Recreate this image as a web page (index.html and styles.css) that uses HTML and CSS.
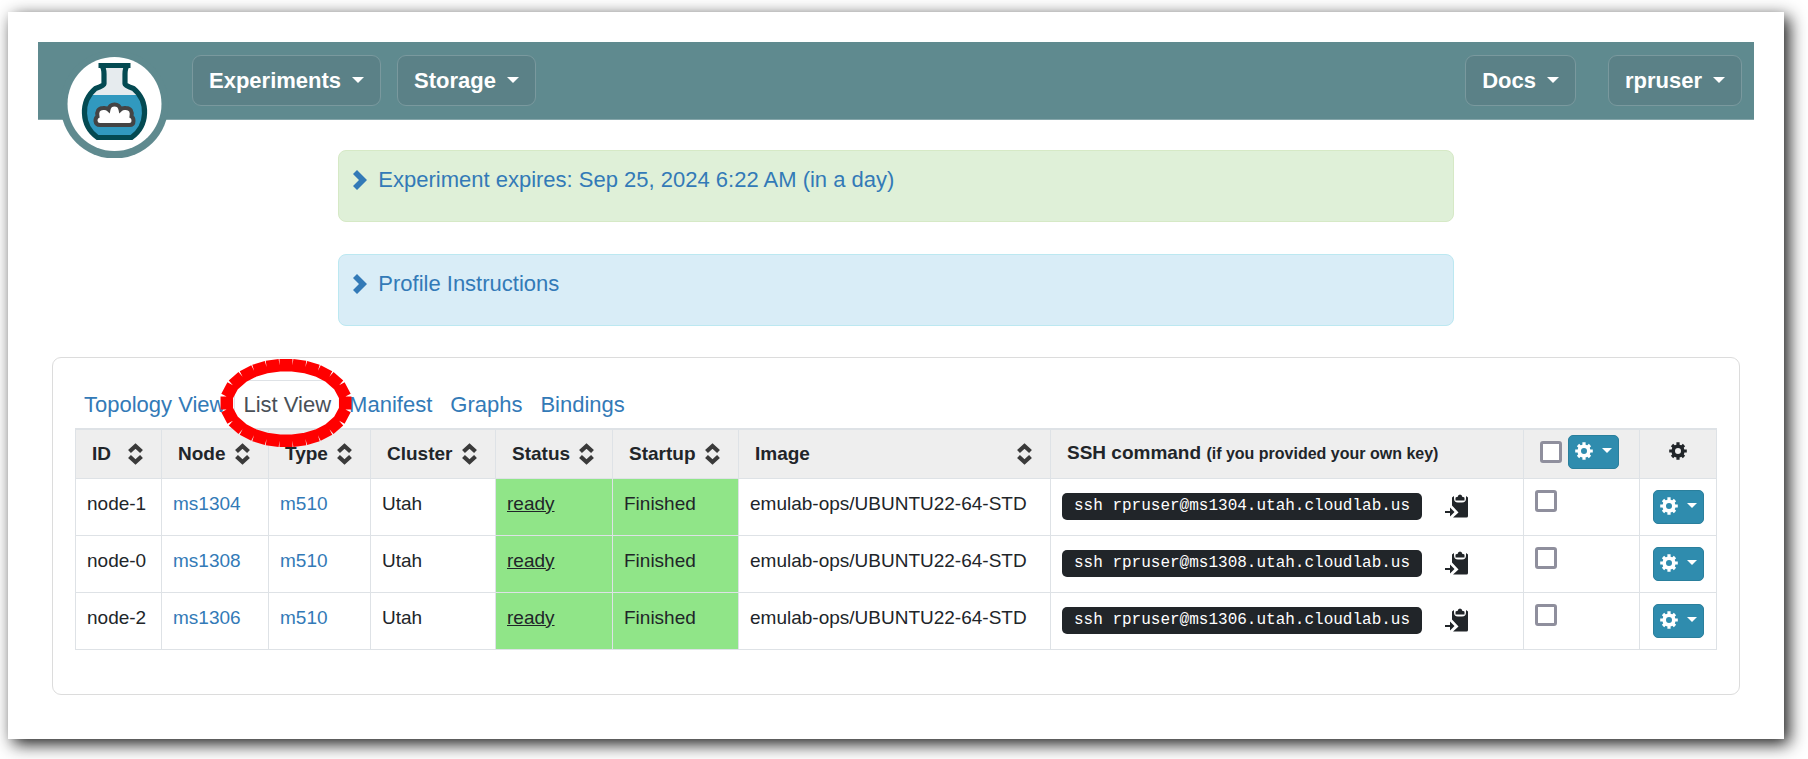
FILE: index.html
```html
<!DOCTYPE html>
<html lang="en">
<head>
<meta charset="utf-8">
<title>Experiment status</title>
<link rel="stylesheet" href="styles.css">
</head>
<body>
<svg class="defs" aria-hidden="true">
  <symbol id="gear" viewBox="-9 -9 18 18">
    <circle r="4.800" fill="none" stroke="currentColor" stroke-width="3.600"/>
    <path d="M0-8.800V-5M0 8.800V5M-8.800 0H-5M8.800 0H5M-6-6l2.500 2.500M6 6l-2.500-2.500M6-6l-2.500 2.500M-6 6l2.500-2.500" stroke="currentColor" stroke-width="3.200"/>
  </symbol>
  <symbol id="chevron" viewBox="0 0 14 20">
    <path d="M0 4 4 0 14 10 4 20 0 16 6 10z" fill="currentColor"/>
  </symbol>
  <symbol id="sort" viewBox="0 0 15 22">
    <path d="M1.500 8.500 7.500 3 13.500 8.500M1.500 13.500 7.500 19 13.500 13.500" fill="none" stroke="#3a3a3a" stroke-width="4.200"/>
  </symbol>
  <symbol id="paste" viewBox="0 0 23 24">
    <path d="M7 3.500 9 2V4.500Q9 8.500 13 8.500H17Q21 8.500 21 4.500V2L23 3.500V22Q23 23.500 21.500 23.500H8L13.500 18.500 7 11.500z" fill="currentColor"/>
    <path d="M10.500 6.500V4Q10.500 3 12 3H12.500Q13 .5 15 .5T17.500 3H18Q19.500 3 19.500 4V6.500z" fill="currentColor"/>
    <path d="M0 17H5V13.500L9.500 18 5 22.500V19H0z" fill="currentColor"/>
  </symbol>
</svg>

<div class="sheet">
  <header class="navbar">
    <a class="logo" href="#" aria-label="CloudLab home">
      <svg viewBox="1 0 108 108">
        <defs>
          <clipPath id="flask"><path d="M42 15H67L64.500 24V34L73.500 38.500A30.500 30.500 0 0 1 71.200 87.500H37.800A30.500 30.500 0 0 1 35.500 38.500L44.500 34V24z"/></clipPath>
        </defs>
        <circle cx="54.500" cy="54.500" r="54" fill="#5f8a8f"/>
        <circle cx="54.500" cy="54" r="47" fill="#fff"/>
        <g clip-path="url(#flask)">
          <rect x="20" y="12" width="70" height="34" fill="#e6ebee"/>
          <rect x="20" y="45" width="70" height="46" fill="#3199bf"/>
        </g>
        <path d="M38.500 15.500H70.500M41.500 15.500Q44 18 44 24V34Q44 35.500 35.500 38.500A31 31 0 0 0 37.500 87.500H71.500A31 31 0 0 0 73.500 38.500Q65 35.500 65 34V24Q65 18 67.500 15.500" fill="none" stroke="#044a52" stroke-width="5.200"/>
        <path d="M40 75H69.500Q73.500 75 73.500 71 73.500 67.500 71.500 66.500 73 58.500 66 58 62.500 57.500 60.500 59.500 59.500 54.500 54.500 54.500T48.500 59.500Q46.500 57.500 43 58 36 58.500 37.500 66.500 35.500 67.500 35.500 71 36 75 40 75z" fill="#fff" stroke="#444" stroke-width="4"/>
      </svg>
    </a>
    <nav class="menu">
      <button type="button" class="menu-btn">Experiments <span class="caret"></span></button>
      <button type="button" class="menu-btn">Storage <span class="caret"></span></button>
    </nav>
    <nav class="menu menu-right">
      <button type="button" class="menu-btn">Docs <span class="caret"></span></button>
      <button type="button" class="menu-btn">rpruser <span class="caret"></span></button>
    </nav>
  </header>

  <main>
    <div class="alerts">
      <section class="alert alert-green">
        <a href="#"><svg class="chevron"><use href="#chevron"/></svg>Experiment expires: Sep 25, 2024 6:22 AM (in a day)</a>
      </section>
      <section class="alert alert-blue">
        <a href="#"><svg class="chevron"><use href="#chevron"/></svg>Profile Instructions</a>
      </section>
    </div>

    <section class="panel">
      <ul class="tabs">
        <li><a href="#">Topology View</a></li>
        <li class="current"><a href="#" aria-current="page">List View</a>
          <svg class="marker" viewBox="-66 -44 132 88" aria-hidden="true">
            <path d="M-6.500-37.800 6.500-37.800M6.500-37.800 19.400-36M19.400-36 31.900-32.200M31.900-32.200 43.400-26.300M43.400-26.300 53.100-17.700M53.100-17.700 59.200-6.400M59.200-6.400V6.400M59.200 6.400 53.100 17.700M53.100 17.700 43.400 26.300M43.400 26.300 31.900 32.200M31.900 32.200 19.400 36M19.400 36 6.500 37.800M6.500 37.800H-6.500M-6.500 37.800-19.400 36M-19.400 36-31.900 32.200M-31.900 32.200-43.400 26.300M-43.400 26.300-53.100 17.700M-53.100 17.700-59.200 6.400M-59.200 6.400V-6.400M-59.200-6.400-53.100-17.700M-53.100-17.700-43.400-26.300M-43.400-26.300-31.900-32.200M-31.900-32.200-19.400-36M-19.400-36-6.500-37.800" stroke="#f00" stroke-width="12.500"/>
          </svg>
        </li>
        <li><a href="#">Manifest</a></li>
        <li><a href="#">Graphs</a></li>
        <li><a href="#">Bindings</a></li>
      </ul>

      <table class="nodes">
        <colgroup>
          <col class="c-id"><col class="c-node"><col class="c-type"><col class="c-cluster"><col class="c-status"><col class="c-startup"><col class="c-image"><col><col class="c-select"><col class="c-action">
        </colgroup>
        <thead>
          <tr>
            <th scope="col"><div class="sortable">ID <svg class="sort"><use href="#sort"/></svg></div></th>
            <th scope="col"><div class="sortable">Node <svg class="sort"><use href="#sort"/></svg></div></th>
            <th scope="col"><div class="sortable">Type <svg class="sort"><use href="#sort"/></svg></div></th>
            <th scope="col"><div class="sortable">Cluster <svg class="sort"><use href="#sort"/></svg></div></th>
            <th scope="col"><div class="sortable">Status <svg class="sort"><use href="#sort"/></svg></div></th>
            <th scope="col"><div class="sortable">Startup <svg class="sort"><use href="#sort"/></svg></div></th>
            <th scope="col"><div class="sortable">Image <svg class="sort"><use href="#sort"/></svg></div></th>
            <th scope="col">SSH command <small>(if you provided your own key)</small></th>
            <th scope="col"><div class="bulk"><input type="checkbox" class="check" aria-label="Select all nodes"><button type="button" class="gear-btn" aria-label="Actions for selected nodes"><svg class="gear"><use href="#gear"/></svg><span class="caret caret-small"></span></button></div></th>
            <th scope="col" class="gear-head" aria-label="Actions"><svg class="gear"><use href="#gear"/></svg></th>
          </tr>
        </thead>
        <tbody>
          <tr>
            <td>node-1</td>
            <td><a href="#">ms1304</a></td>
            <td><a href="#">m510</a></td>
            <td>Utah</td>
            <td class="ok"><u>ready</u></td>
            <td class="ok">Finished</td>
            <td>emulab-ops/UBUNTU22-64-STD</td>
            <td><div class="ssh"><code>ssh rpruser@ms1304.utah.cloudlab.us</code><button type="button" class="copy" aria-label="Copy command"><svg><use href="#paste"/></svg></button></div></td>
            <td><input type="checkbox" class="check" aria-label="Select node-1"></td>
            <td><button type="button" class="gear-btn" aria-label="Actions for node-1"><svg class="gear"><use href="#gear"/></svg><span class="caret caret-small"></span></button></td>
          </tr>
          <tr>
            <td>node-0</td>
            <td><a href="#">ms1308</a></td>
            <td><a href="#">m510</a></td>
            <td>Utah</td>
            <td class="ok"><u>ready</u></td>
            <td class="ok">Finished</td>
            <td>emulab-ops/UBUNTU22-64-STD</td>
            <td><div class="ssh"><code>ssh rpruser@ms1308.utah.cloudlab.us</code><button type="button" class="copy" aria-label="Copy command"><svg><use href="#paste"/></svg></button></div></td>
            <td><input type="checkbox" class="check" aria-label="Select node-0"></td>
            <td><button type="button" class="gear-btn" aria-label="Actions for node-0"><svg class="gear"><use href="#gear"/></svg><span class="caret caret-small"></span></button></td>
          </tr>
          <tr>
            <td>node-2</td>
            <td><a href="#">ms1306</a></td>
            <td><a href="#">m510</a></td>
            <td>Utah</td>
            <td class="ok"><u>ready</u></td>
            <td class="ok">Finished</td>
            <td>emulab-ops/UBUNTU22-64-STD</td>
            <td><div class="ssh"><code>ssh rpruser@ms1306.utah.cloudlab.us</code><button type="button" class="copy" aria-label="Copy command"><svg><use href="#paste"/></svg></button></div></td>
            <td><input type="checkbox" class="check" aria-label="Select node-2"></td>
            <td><button type="button" class="gear-btn" aria-label="Actions for node-2"><svg class="gear"><use href="#gear"/></svg><span class="caret caret-small"></span></button></td>
          </tr>
        </tbody>
      </table>
    </section>
  </main>
</div>
</body>
</html>
```
FILE: styles.css
```css
* { box-sizing: border-box; }

body {
  margin: 0;
  padding: 12px 24px 20px 8px;
  background: #fff;
  color: #212529;
  font-family: "Liberation Sans", Arial, sans-serif;
  font-size: 19px;
  line-height: 28px;
}

button, input { font: inherit; margin: 0; }
svg { display: block; }
a { color: #337ab7; text-decoration: none; }
.defs { position: absolute; width: 0; height: 0; }

.sheet {
  padding: 30px 30px 44px;
  background: #fff;
  box-shadow: 5px 5px 16px rgba(0, 0, 0, 0.9);
}

/* Navigation bar */
.navbar {
  position: relative;
  display: flex;
  justify-content: space-between;
  padding: 13px 12px 13px 154px;
  background: #5f8a8f;
  border-bottom: 1px solid #86a6aa;
}
.logo {
  position: absolute;
  left: 23px;
  top: 8px;
  width: 108px;
  height: 108px;
}
.menu { display: flex; gap: 16px; }
.menu-right { gap: 32px; }
.menu-btn {
  display: flex;
  align-items: center;
  gap: 11px;
  height: 51px;
  padding: 0 16px;
  border: 1px solid #7a999e;
  border-radius: 9px;
  background: #5b8187;
  color: #fff;
  font-size: 22px;
  font-weight: bold;
}
.caret {
  border: 6px solid transparent;
  border-top-color: currentColor;
  border-bottom-width: 0;
  margin-bottom: 2px;
}
.caret-small { border-width: 5px 5px 0; }

/* Notices */
.alerts {
  display: grid;
  gap: 32px;
  width: 65%;
  margin: 30px auto 31px;
}
.alert {
  height: 72px;
  padding: 15px 14px;
  border: 1px solid #d6e9c6;
  border-radius: 8px;
  font-size: 22px;
}
.alert a { display: flex; align-items: center; gap: 11px; }
.alert-green { background: #dff0d8; }
.alert-blue { background: #d9edf7; border-color: #bce8f1; }
.chevron { width: 14px; height: 20px; }

/* Main panel */
.panel {
  margin: 0 14px;
  padding: 22px 22px 44px;
  border: 1px solid #dcdcdc;
  border-radius: 9px;
}
.tabs {
  display: flex;
  margin: 0;
  padding: 0;
  list-style: none;
  font-size: 22px;
}
.tabs a {
  display: block;
  height: 48px;
  padding: 10px 8px;
  border: 1px solid transparent;
  border-radius: 8px 8px 0 0;
}
.current { position: relative; }
.current a {
  color: #495057;
  border-color: #dee2e6 #dee2e6 transparent;
}
.marker {
  position: absolute;
  left: -14px;
  top: -21px;
  width: 132px;
  height: 88px;
  z-index: 1;
}

/* Node table */
.nodes {
  width: 100%;
  table-layout: fixed;
  border-collapse: collapse;
}
.c-id { width: 86px; }
.c-node { width: 107px; }
.c-type { width: 102px; }
.c-cluster { width: 125px; }
.c-status { width: 117px; }
.c-startup { width: 126px; }
.c-image { width: 312px; }
.c-select { width: 116px; }
.c-action { width: 77px; }
.nodes th {
  height: 49px;
  padding: 0 16px;
  background: #eee;
  border: 1px solid #dee2e6;
  border-top-width: 2px;
  text-align: left;
  white-space: nowrap;
}
.nodes small { font-size: 16px; }
.nodes td {
  height: 57px;
  padding: 11px;
  border: 1px solid #dee2e6;
  vertical-align: top;
  white-space: nowrap;
}
.nodes td:last-child { padding-left: 13px; }
.nodes td.ok { background: #90e588; }
.sortable {
  display: flex;
  align-items: center;
  justify-content: space-between;
  padding-right: 2px;
}
.sort { width: 15px; height: 22px; }
.bulk { display: flex; align-items: center; gap: 6px; margin-bottom: 4px; }
.check {
  appearance: none;
  display: block;
  width: 22px;
  height: 22px;
  border: 3px solid #8f8f9d;
  border-radius: 3px;
  background: #fff;
}
.gear-btn {
  display: flex;
  align-items: center;
  gap: 9px;
  height: 34px;
  padding: 0 6px;
  border: 1px solid #2a7f9c;
  border-radius: 5px;
  background: #2f8cae;
  color: #fff;
}
.gear { width: 18px; height: 18px; margin-bottom: 2px; }
.nodes .gear-head { padding-left: 29px; }
.gear-head .gear { margin-bottom: 6px; }
.ssh {
  display: flex;
  align-items: center;
  gap: 23px;
  padding-top: 3px;
}
.ssh code {
  padding: 0 12px;
  border-radius: 5px;
  background: #212529;
  color: #fff;
  font-family: "Liberation Mono", monospace;
  font-size: 16px;
  line-height: 27px;
}
.copy {
  padding: 0;
  border: 0;
  background: none;
  color: #212529;
}
.copy svg { width: 23px; height: 24px; }
```
